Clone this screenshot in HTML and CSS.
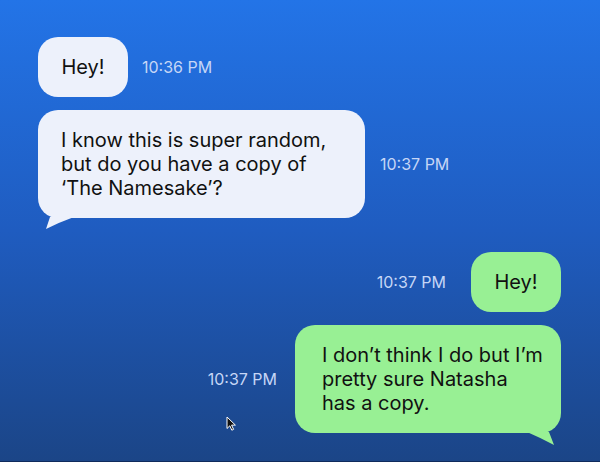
FILE: index.html
```html
<!DOCTYPE html>
<html lang="en">
<head>
<meta charset="utf-8">
<title>Chat</title>
<link rel="stylesheet" href="styles.css">
</head>
<body>
<main class="chat">
  <div class="row in">
    <div class="bubble light short">Hey!</div>
    <span class="time t1">10:36 PM</span>
  </div>
  <div class="row in">
    <div class="bubble light long">I know this is super random, but do you have a copy of ‘The Namesake’?
      <svg class="tail tail-left" width="40" height="14" viewBox="0 0 40 14"><path d="M12 0 L8 12 Q22 5 36 0 Z" fill="#edf1fb"/></svg>
    </div>
    <span class="time t2">10:37 PM</span>
  </div>
  <div class="row out group">
    <span class="time t3">10:37 PM</span>
    <div class="bubble green short">Hey!</div>
  </div>
  <div class="row out">
    <span class="time t4">10:37 PM</span>
    <div class="bubble green long2">I don’t think I do but I’m<br>pretty sure Natasha<br>has a copy.
      <svg class="tail tail-right" width="40" height="16" viewBox="0 0 40 16"><path d="M6 0 Q20 6 33 13 L28 0 Z" fill="#98f094"/></svg>
    </div>
  </div>
  <svg class="cursor" width="12" height="16" viewBox="0 0 12 16"><path d="M1 1 L1 12.5 L3.8 9.8 L5.8 14.2 L7.6 13.4 L5.6 9.1 L9.4 9.1 Z" fill="#111" stroke="#fff" stroke-width="1"/></svg>
</main>
</body>
</html>
```

FILE: styles.css
```css
html, body {
  margin: 0;
  padding: 0;
}

body {
  width: 600px;
  height: 462px;
  overflow: hidden;
  font-family: Inter, "Noto Sans", sans-serif;
}

.chat {
  position: relative;
  box-sizing: border-box;
  height: 462px;
  padding: 37px 39px 0 38px;
  display: flex;
  flex-direction: column;
  gap: 13px;
  background: linear-gradient(180deg, #2374e7 0%, #1f5cc0 50%, #1b4587 100%);
  border-bottom: 1px solid #0f2b5c;
}

.row {
  display: flex;
  align-items: center;
}

.row.out {
  justify-content: flex-end;
}

.row.group {
  margin-top: 21px;
}

.bubble {
  position: relative;
  box-sizing: border-box;
  font-size: 20px;
  line-height: 24px;
  color: #111;
  border-radius: 20px;
  padding: 18px 23px;
}

.bubble.light {
  background: #edf1fb;
}

.bubble.green {
  background: #98f094;
}

.bubble.short {
  width: 90px;
  text-align: center;
  padding-left: 0;
  padding-right: 0;
}

.bubble.long {
  width: 327px;
}

.bubble.long2 {
  width: 266px;
  padding-left: 27px;
  padding-right: 10px;
}

.time {
  font-size: 16px;
  color: #c6d6f6;
  white-space: nowrap;
}

.t1 { margin-left: 14px; }
.t2 { margin-left: 15px; }
.t3 { margin-right: 25px; }
.t4 { margin-right: 18px; }

.tail {
  position: absolute;
  top: 100%;
  margin-top: -1px;
}

.tail-left {
  left: 0;
}

.tail-right {
  right: 0;
}

.cursor {
  position: absolute;
  left: 226px;
  top: 416px;
}
```
